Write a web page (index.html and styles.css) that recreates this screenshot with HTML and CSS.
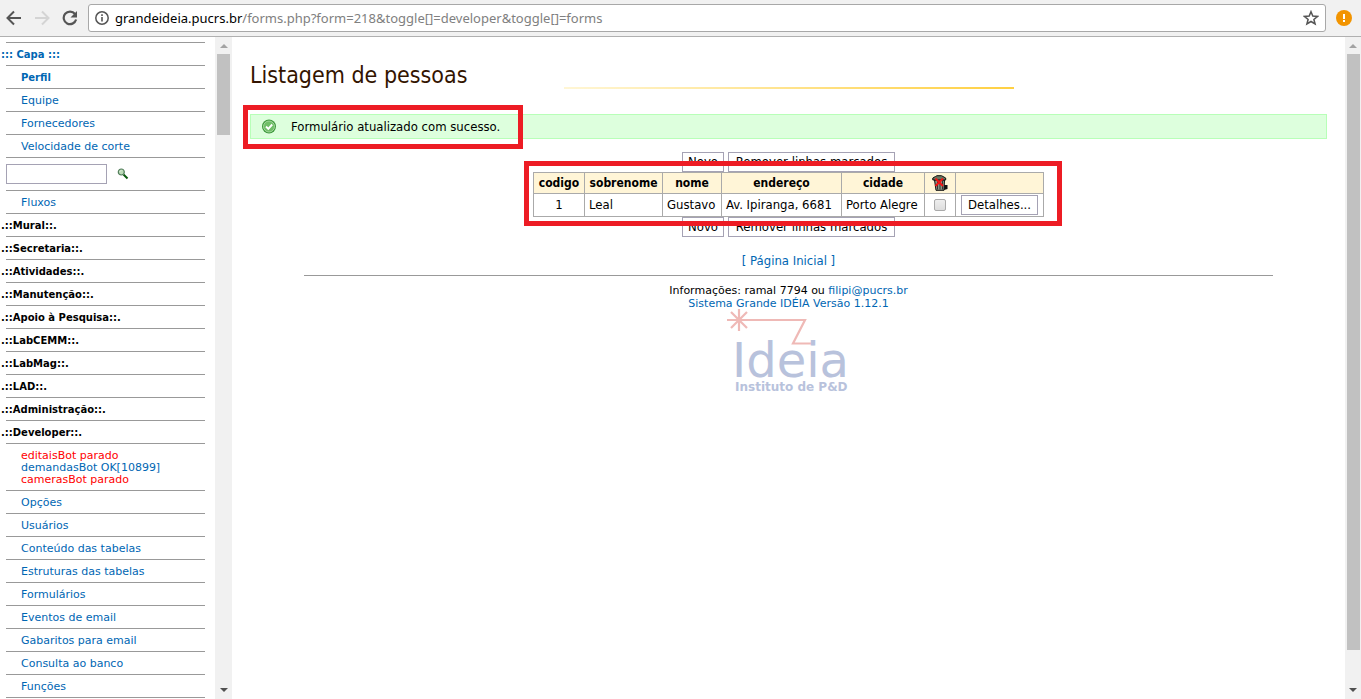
FILE: index.html
```html
<!DOCTYPE html>
<html lang="pt-BR">
<head>
<meta charset="utf-8">
<title>Listagem de pessoas</title>
<link rel="stylesheet" href="styles.css">
</head>
<body>
<header class="toolbar">
  <button class="tool" type="button" aria-label="Voltar"><svg width="16" height="16" viewBox="0 0 16 16" fill="none" stroke="#555" stroke-width="2"><path d="M15 8H2M8 1.500L1.500 8L8 14.500"/></svg></button>
  <button class="tool" type="button" aria-label="Avançar"><svg width="16" height="16" viewBox="0 0 16 16" fill="none" stroke="#d4d4d4" stroke-width="2"><path d="M1 8H14M8 1.500L14.500 8L8 14.500"/></svg></button>
  <button class="tool" type="button" aria-label="Recarregar"><svg width="16" height="16" viewBox="0 0 16 16"><path d="M13 4A6.300 6.300 0 1 0 14.100 9.500" fill="none" stroke="#555" stroke-width="2.200"/><path d="M15 1V7.500H8.500Z" fill="#555"/></svg></button>
  <div class="address">
    <svg width="14" height="14" viewBox="0 0 14 14"><circle cx="7" cy="7" r="6.200" fill="none" stroke="#555" stroke-width="1.500"/><path d="M6.200 6h1.600v4.500H6.200zM6.200 3.300h1.600v1.600H6.200z" fill="#555"/></svg>
    <div class="url"><span class="host">grandeideia.pucrs.br</span>/forms.php?form=218&amp;toggle[]=developer&amp;toggle[]=forms</div>
    <button class="star" type="button" aria-label="Favorito"><svg width="16" height="16" viewBox="0 0 16 16"><path d="M8 1.700L9.800 6.100L14.500 6.400L10.900 9.400L12.100 14L8 11.500L3.900 14L5.100 9.400L1.500 6.400L6.200 6.100Z" fill="none" stroke="#555" stroke-width="1.500"/></svg></button>
  </div>
  <button class="alert-badge" type="button" aria-label="Aviso"><svg width="16" height="16" viewBox="0 0 16 16"><circle cx="8" cy="8" r="8" fill="#f29400"/><path d="M7 4h2v5H7zM7 10h2v2H7z" fill="#fff"/></svg></button>
</header>
<div class="frames">
  <nav class="sidebar">
    <ul class="menu">
      <li class="top"><a href="#"><b>::: Capa :::</b></a></li>
      <li><a href="#"><b>Perfil</b></a></li>
      <li><a href="#">Equipe</a></li>
      <li><a href="#">Fornecedores</a></li>
      <li><a href="#">Velocidade de corte</a></li>
      <li class="search"><input type="text" aria-label="Buscar"><button type="button" aria-label="Pesquisar"><svg width="12" height="12" viewBox="0 0 12 12"><path d="M6.500 6.500L10.500 10.500" stroke="#07580a" stroke-width="2"/><circle cx="4.300" cy="4" r="3" fill="#bcdcb8" stroke="#527d5b" stroke-width="1.200"/><path d="M3 3.500L4 2.500" stroke="#fff"/></svg></button></li>
      <li><a href="#">Fluxos</a></li>
      <li class="top">.::Mural::.</li>
      <li class="top">.::Secretaria::.</li>
      <li class="top">.::Atividades::.</li>
      <li class="top">.::Manutenção::.</li>
      <li class="top">.::Apoio à Pesquisa::.</li>
      <li class="top">.::LabCEMM::.</li>
      <li class="top">.::LabMag::.</li>
      <li class="top">.::LAD::.</li>
      <li class="top">.::Administração::.</li>
      <li class="top">.::Developer::.</li>
      <li><a class="stopped" href="#">editaisBot parado</a><a href="#">demandasBot OK[10899]</a><a class="stopped" href="#">camerasBot parado</a></li>
      <li><a href="#">Opções</a></li>
      <li><a href="#">Usuários</a></li>
      <li><a href="#">Conteúdo das tabelas</a></li>
      <li><a href="#">Estruturas das tabelas</a></li>
      <li><a href="#">Formulários</a></li>
      <li><a href="#">Eventos de email</a></li>
      <li><a href="#">Gabaritos para email</a></li>
      <li><a href="#">Consulta ao banco</a></li>
      <li><a href="#">Funções</a></li>
      <li></li>
    </ul>
  </nav>
  <div class="scroll"><span class="arrow up"></span><span class="thumb short"></span><span class="arrow down"></span></div>
  <main class="content">
    <h1>Listagem de pessoas</h1>
    <div class="notice">
      <svg width="16" height="16" viewBox="0 0 16 16"><circle cx="8" cy="7.500" r="7" fill="#3f9a3d"/><circle cx="8" cy="7.500" r="5.500" fill="#6fbf67" stroke="#b5dfb0" stroke-width=".8"/><path d="M5 7.500L7.300 9.800L11.200 5.500" fill="none" stroke="#fff" stroke-width="1.900"/></svg>
      <span>Formulário atualizado com sucesso.</span>
      <i class="mark mark-notice"></i>
    </div>
    <form class="listing">
      <div class="actions"><button class="btn" type="button">Novo</button><button class="btn wide" type="button">Remover linhas marcados</button></div>
      <div class="table-box">
        <table>
          <colgroup><col class="c-code"><col class="c-last"><col class="c-name"><col class="c-addr"><col class="c-city"><col class="c-del"><col class="c-more"></colgroup>
          <thead><tr><th>codigo</th><th>sobrenome</th><th>nome</th><th>endereço</th><th>cidade</th><th class="bin"><svg width="16" height="16" viewBox="0 0 16 16"><path d="M11 10h4.500v4L12 15z" fill="#111"/><path d="M2.500 5H12.500L12 15.300H4Z" fill="#8b9685" stroke="#111"/><path d="M5.500 6V14.500M8 6V14.500M10.500 6V14.500" stroke="#333"/><path d="M.8 5V3L3.500 1.500L5 .7H9.500L11 1.500L13.700 3V5Z" fill="#68755f" stroke="#111"/><path d="M3.500 3.500L11 11M11 3.500L3.500 11" stroke="#f01414" stroke-width="2"/></svg></th><th></th></tr></thead>
          <tbody><tr><td class="mid">1</td><td>Leal</td><td>Gustavo</td><td>Av. Ipiranga, 6681</td><td>Porto Alegre</td><td class="mid"><input class="tick" type="checkbox" aria-label="Remover Leal"></td><td class="mid"><button class="btn detail" type="button">Detalhes...</button></td></tr></tbody>
        </table>
        <i class="mark mark-table"></i>
      </div>
      <div class="actions"><button class="btn" type="button">Novo</button><button class="btn wide" type="button">Remover linhas marcados</button></div>
    </form>
    <p class="home"><a href="#">[ Página Inicial ]</a></p>
    <footer>
      <p>Informações: ramal 7794 ou <a href="#">filipi@pucrs.br</a></p>
      <p><a href="#">Sistema Grande IDÉIA Versão 1.12.1</a></p>
      <svg class="logo" width="122" height="84" viewBox="0 0 122 84" role="img" aria-label="Ideia Instituto de P&amp;D">
        <path d="M0 11H78L66 34.500H86M12 0V22M4 3L20 19M20 3L4 19" fill="none" stroke="#efb9b6" stroke-width="2.200"/>
        <text class="logo-name" x="5" y="68">Ideia</text>
        <text class="logo-text" x="8" y="82">Instituto de P&amp;D</text>
      </svg>
    </footer>
  </main>
  <div class="scroll"><span class="arrow up"></span><span class="thumb long"></span><span class="arrow down"></span></div>
</div>
</body>
</html>
```
FILE: styles.css
```css
* { box-sizing: border-box; }
body { margin: 0; height: 100vh; display: flex; flex-direction: column; overflow: hidden; background: #fff; color: #000; font: 13px/16px "DejaVu Sans Condensed", "DejaVu Sans", sans-serif; }
a { color: #0066b3; text-decoration: none; }
p { margin: 0; }
button { font: inherit; color: inherit; padding: 0; border: 0; background: none; }
svg { display: block; }

.toolbar { display: flex; flex: none; align-items: center; height: 37px; padding: 0 9px 0 6px; background: #f1f1f1; border-bottom: 1px solid #b0b0b0; }
.tool { width: 16px; margin-right: 12px; }
.tool:nth-child(3) { margin-right: 10px; }
.address { display: flex; flex: 1; align-items: center; height: 28px; padding: 0 6px; margin-right: 10px; background: #fff; border: 1px solid #a8a8a8; border-radius: 3px; }
.url { flex: 1; margin-left: 6px; font: 13px/20px "Noto Sans", sans-serif; color: #808080; white-space: nowrap; }
.host { color: #000; }

.frames { display: flex; flex: 1; min-height: 0; }
.sidebar { width: 215px; flex: none; overflow: hidden; font: 11px/12px "DejaVu Sans", sans-serif; }
.menu { list-style: none; margin: 5px 10px 0 6px; padding: 0; }
.menu li { padding: 6px 0 4px 15px; border-top: 1px solid #999; }
.menu .top { padding-left: 0; text-indent: -5px; font-weight: bold; font-size: 10px; }
.menu b { font-size: 10px; }
.menu a { display: block; }
.menu .stopped { color: #f00; }
.menu .search { display: flex; align-items: center; gap: 10px; padding: 6px 0; }
.search input { width: 101px; height: 20px; border: 1px solid #a5a2b4; padding: 0 2px; }

.scroll { width: 17px; flex: none; display: flex; flex-direction: column; align-items: center; background: #f1f1f1; }
.scroll:last-child { width: 16px; }
.arrow { width: 0; height: 0; border: 4px solid transparent; border-top-width: 0; border-bottom: 4px solid #a3a3a3; margin: 7px 0 6px; }
.down { border-width: 4px 4px 0; border-color: #505050 transparent transparent; margin: auto 0 7px; }
.thumb { width: 13px; background: #c1c1c1; }
.short { height: 81px; }
.long { height: 596px; }

.content { flex: 1; min-width: 0; padding: 22px 18px 0; }
h1 { margin: 0 0 25px; height: 30px; font: 23px/32px "DejaVu Sans Condensed", sans-serif; color: #331400; background: linear-gradient(90deg, #fff6d5, #ffd042) no-repeat center bottom / 450px 2px; }
.notice { position: relative; display: flex; align-items: center; gap: 14px; height: 25px; padding: 1px 10px 0; background: #dfd; border: 1px solid #b8ffb8; }
.mark { position: absolute; border: 5px solid #ed1c24; pointer-events: none; }
.mark-notice { left: -8px; top: -10px; width: 280px; height: 44px; }
.mark-table { inset: -11px -18px -9px -9px; }

.listing { display: flex; flex-direction: column; align-items: center; margin-top: 13px; }
.actions { display: flex; gap: 4px; }
.btn { min-width: 42px; height: 20px; background: #fff; border: 1px solid #a5a2b4; line-height: 18px; white-space: nowrap; }
.wide { width: 167px; }
.detail { width: 77px; display: block; margin: 0 auto; }
.table-box { position: relative; }
table { border-collapse: collapse; }
th, td { border: 1px solid #aaa; padding: 0 4px; text-align: left; white-space: nowrap; }
th { height: 21px; padding: 0; background: #fff5d7; text-align: center; font-size: 12px; }
td { height: 23px; }
.mid { text-align: center; }
.bin svg { margin: 0 auto; }
.c-code { width: 51px; }
.c-last { width: 78px; }
.c-name { width: 59px; }
.c-addr { width: 120px; }
.c-city { width: 83px; }
.c-del { width: 31px; }
.c-more { width: 88px; }
.tick { appearance: none; display: block; margin: 0 auto; width: 12px; height: 12px; border: 1px solid #aaa; border-radius: 2px; background: linear-gradient(#eee, #ddd); }

.home { margin: 16px 0 6px; text-align: center; }
footer { width: 90%; margin: 0 auto; padding-top: 8px; border-top: 1px solid #999; text-align: center; font: 11px/13px "DejaVu Sans", sans-serif; }
.logo { margin: -1px auto 0; overflow: visible; }
.logo-name { font: 48px "DejaVu Sans", sans-serif; fill: #b8c2dc; }
.logo-text { font: bold 12px "DejaVu Sans", sans-serif; fill: #b8c2dc; }
```
